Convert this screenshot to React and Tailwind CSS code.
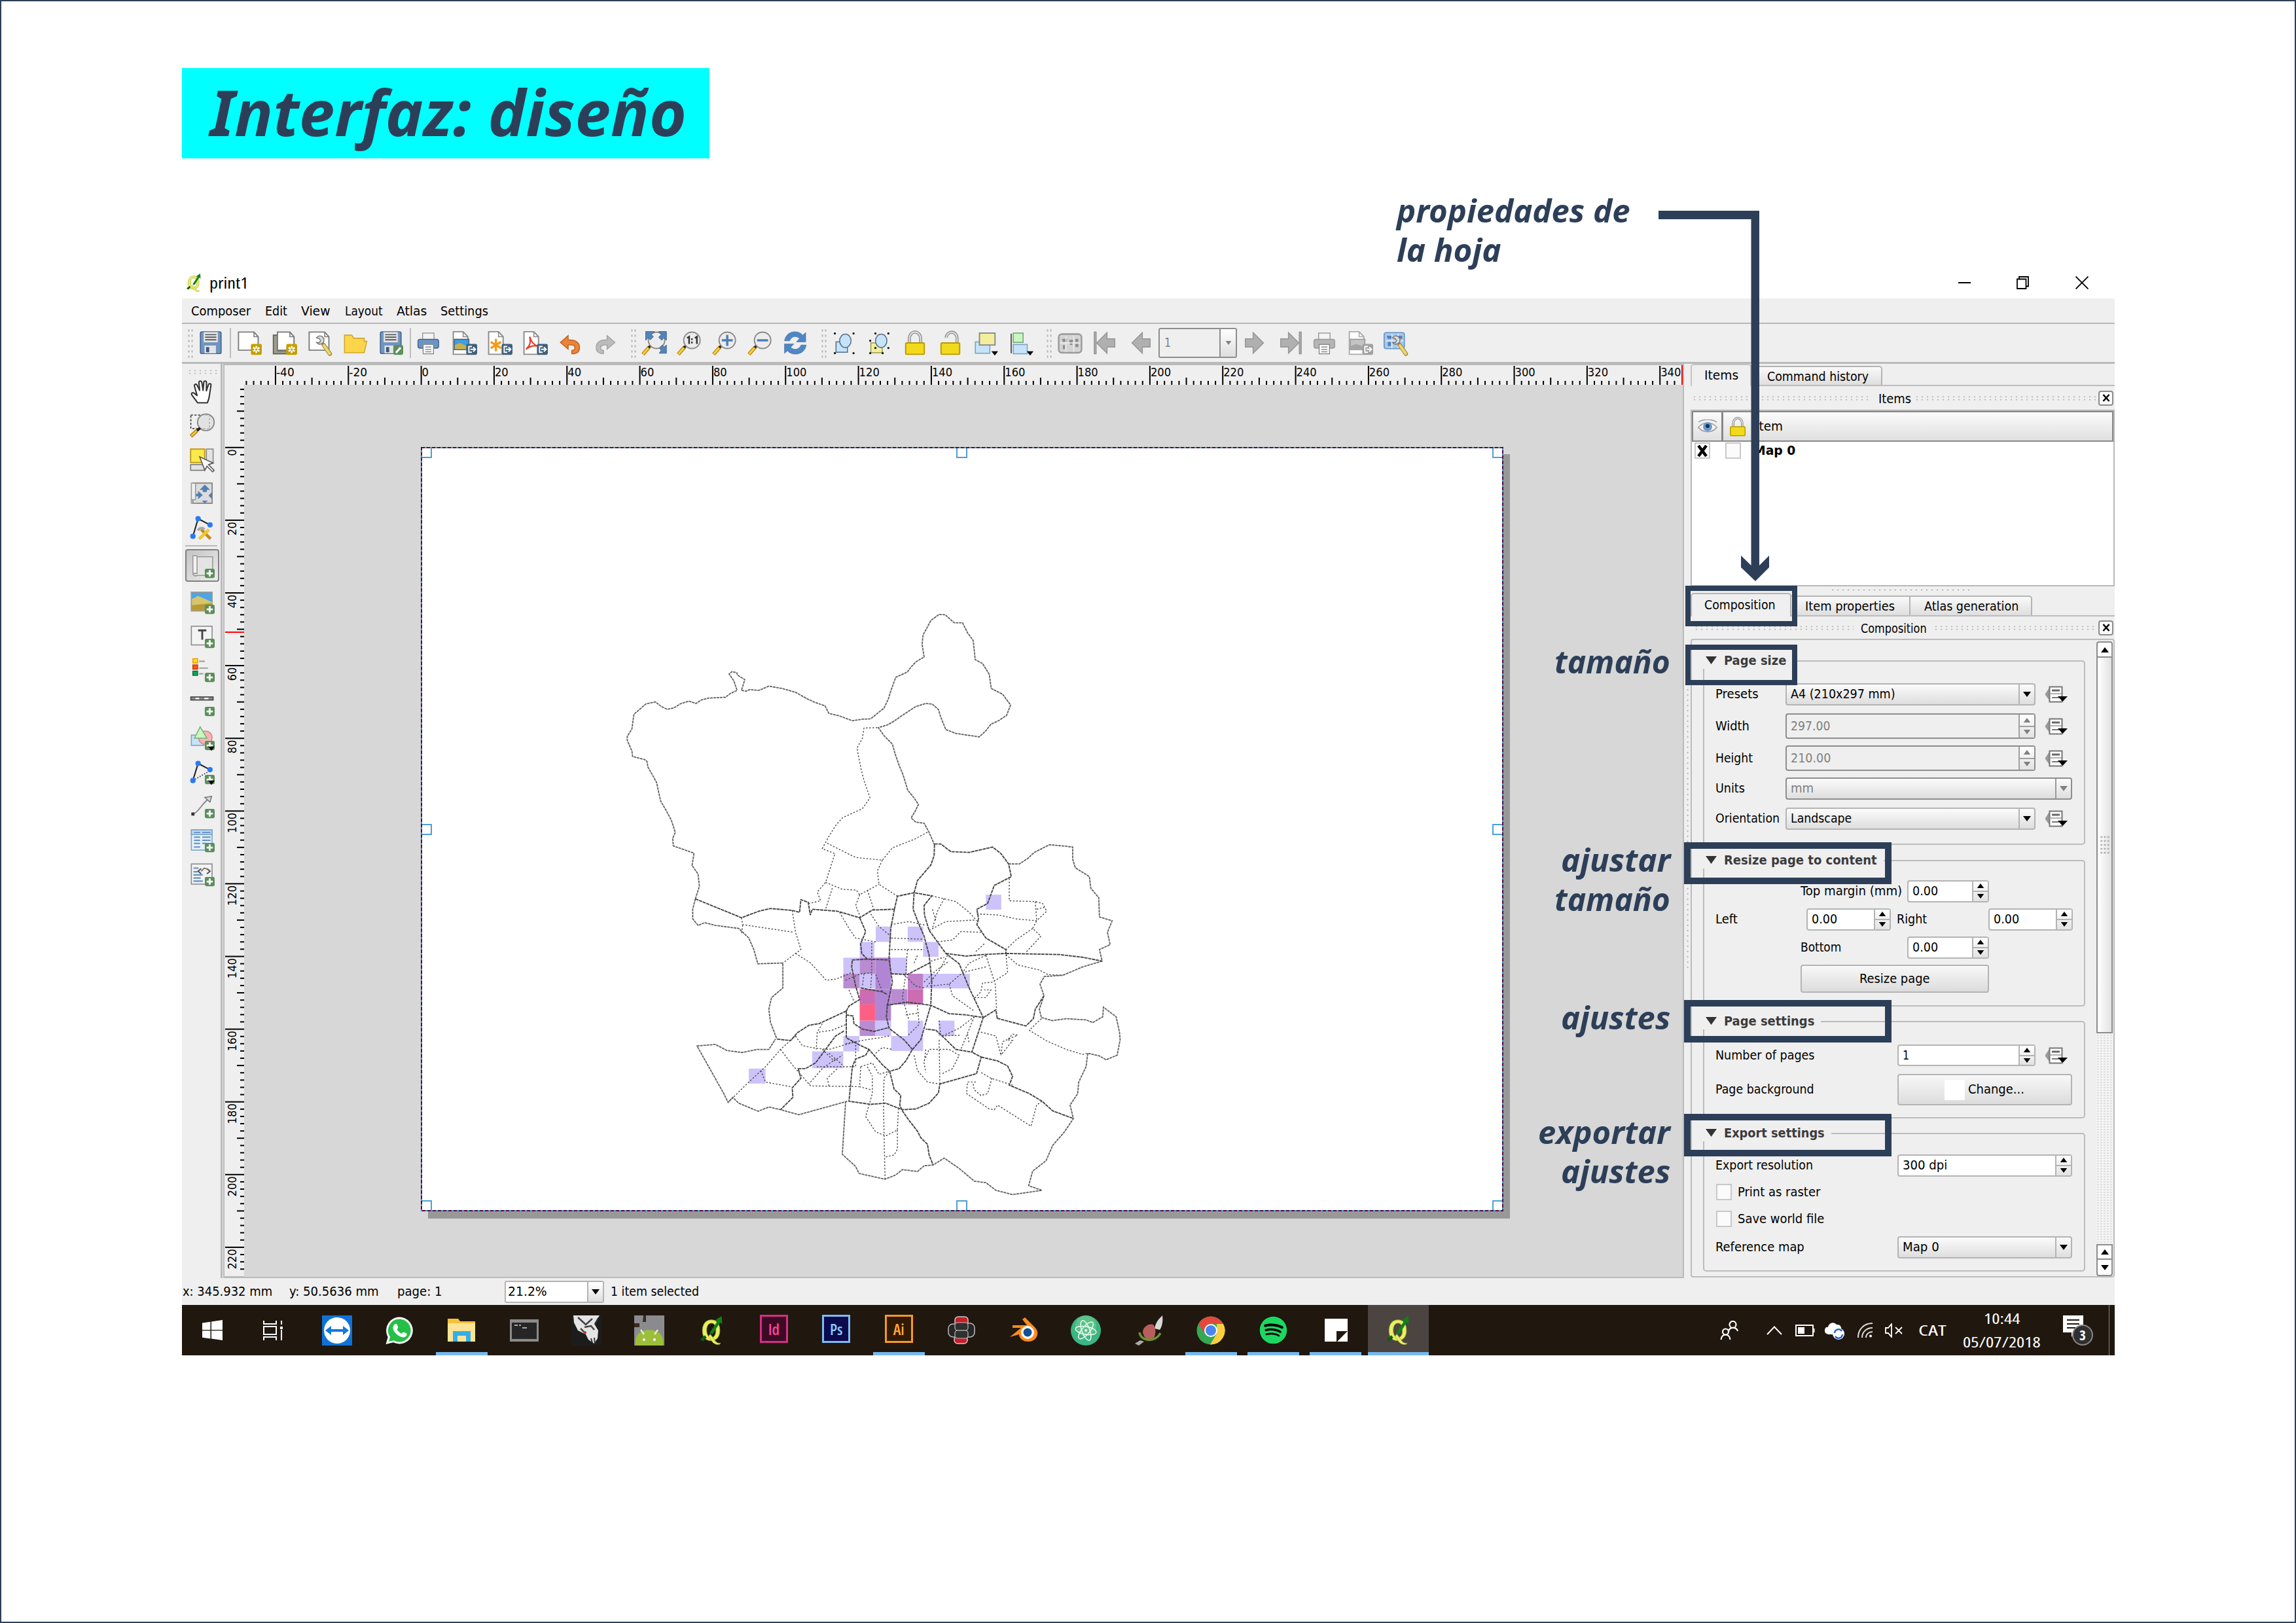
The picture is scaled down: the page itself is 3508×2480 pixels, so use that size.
import React, { useLayoutEffect, useRef, useState } from "react";
import { FaSpotify } from "react-icons/fa";

/* Single line of text stretched horizontally so that it is exactly w pixels wide. */
function T({ w, className = "", children }) {
  const ref = useRef(null);
  const [s, setS] = useState(1);
  useLayoutEffect(() => {
    const n = ref.current.offsetWidth;
    if (n) setS((w + 2) / n);
  }, [w]);
  return (
    <span className={"inline-flex shrink-0 whitespace-nowrap " + className} style={{ width: w }}>
      <span ref={ref} className="-ml-[1px] inline-block origin-left" style={{ transform: `scaleX(${s})` }}>
        {children}
      </span>
    </span>
  );
}

/* ---------- icon primitives (24 x 24 grid) ---------- */
function Ic({ children, className = "w-[38px] h-[38px]" }) {
  return (
    <svg viewBox="0 0 24 24" className={"shrink-0 overflow-visible " + className} fill="none">
      {children}
    </svg>
  );
}
const Plus = () => (
  <g>
    <rect x="14.5" y="14.5" width="9.5" height="9" rx="1.5" fill="#5b8f5b" />
    <path d="M19.2 16v6M16.2 19h6" stroke="#fff" strokeWidth="1.8" />
  </g>
);
const Star = () => (
  <g>
    <rect x="13.5" y="13" width="10.5" height="10.5" rx="1.5" fill="#c4a000" />
    <path d="M18.7 14.8v7M15.7 16.5l6 3.5M21.7 16.5l-6 3.5" stroke="#fff" strokeWidth="1.5" />
    <circle cx="18.7" cy="18.3" r="1.1" fill="#c4a000" />
  </g>
);
const Out = ({ c = "#3f607c" }) => (
  <g>
    <rect x="13.5" y="13" width="10.5" height="10.5" rx="1.5" fill={c} />
    <path d="M19 15.5h-3v5.500h3M17.500 18.200h4.500M20.200 16l2.200 2.200-2.200 2.200" stroke="#fff" strokeWidth="1.2" />
  </g>
);
const Sheet = ({ c = "#7d7d7d" }) => (
  <g>
    <path d="M1.500 1.500h15l4 4.500v13h-19z" fill="#fff" stroke={c} strokeWidth="1.200" />
    <path d="M16.500 1.500v4.500h4" stroke={c} strokeWidth="1" />
  </g>
);
const Portrait = ({ c = "#8a8a8a" }) => (
  <g>
    <path d="M1 1.200h9.500l4.500 4.800v17h-14z" fill="#fff" stroke={c} strokeWidth="1.200" />
    <path d="M10.500 1.200v4.800h4.500" stroke={c} strokeWidth="1" />
  </g>
);
const Disk = () => (
  <g>
    <rect x="2" y="1.300" width="20" height="21" rx="1.500" fill="#6d94c4" stroke="#45658f" strokeWidth="1" />
    <rect x="5" y="1.500" width="14" height="10" fill="#eee" stroke="#8a9bb0" strokeWidth=".6" />
    <path d="M6.500 4h11M6.500 6.500h11M6.500 9h11" stroke="#555" strokeWidth="1.200" />
    <rect x="6" y="14.500" width="11" height="7.500" fill="#e4e4e4" />
    <rect x="7.500" y="16" width="3" height="5" fill="#3b587f" />
  </g>
);
const Printer = ({ c = "#6d94c4", d = "#45658f" }) => (
  <g transform="translate(-1 0)">
    <rect x="6.500" y="2.500" width="11" height="8" fill="#f4f4f4" stroke="#999" strokeWidth=".9" />
    <rect x="2" y="8.500" width="20" height="8.500" rx="2" fill={c} stroke={d} strokeWidth=".9" />
    <rect x="7" y="13.500" width="10" height="9" fill="#fff" stroke="#888" strokeWidth=".9" />
    <path d="M9 16h6M9 18.300h6M9 20.500h6" stroke="#888" strokeWidth=".9" />
  </g>
);
const Lens = ({ children }) => (
  <g>
    <path d="M.800 23l6.500-7.500" stroke="#c08a10" strokeWidth="3.600" />
    <path d="M1.100 22.600l5-5.700" stroke="#f7d040" strokeWidth="1.800" />
    <path d="M6.500 16.500l2.300-2.700" stroke="#222" strokeWidth="2.200" />
    <circle cx="14" cy="9.500" r="7.900" fill="#ececec" stroke="#8a8a8a" strokeWidth="1.200" />
    {children}
  </g>
);
const Wrench = () => (
  <g>
    <path d="M15.500 14l6 8.500" stroke="#a08a3c" strokeWidth="4" strokeLinecap="round" />
    <path d="M15.800 14.500l5.500 7.800" stroke="#ecd672" strokeWidth="2.600" strokeLinecap="round" />
    <path d="M8.500 7a4 4 0 1 1 0 4.500l3 .2 1-2-1.500-2z" fill="#dcdcdc" stroke="#777" strokeWidth=".9" />
  </g>
);
const Drop = () => <path d="M17.500 20h6.500l-3.200 4.200z" fill="#000" />;
const Arrow = ({ flip, bar }) => (
  <g transform={flip ? "matrix(-1 0 0 1 24 0)" : undefined} fill="#b0b0b0" stroke="#949494" strokeWidth=".9">
    <path d="M3.500 12L13.500 2v6H21v8h-7.500v6z" />
    {bar && <rect x="1.200" y="1.500" width="1.800" height="21" />}
  </g>
);
const Qgis = () => (
  <g>
    <path
      d="M12 3.200c-5.500 0-7.500 4.500-7.500 9s2 8.300 7 8.300c5.500 0 7.500-4 7.500-8.600s-2-8.700-7-8.700zm0 2.700c2.800 0 3.700 2.800 3.700 6s-1 5.900-3.700 5.900-4-2.700-4-5.900 1.200-6 4-6z"
      fill="#e6f063" stroke="#a3a72e" strokeWidth=".5" fillRule="evenodd"
    />
    <path d="M11 15l4 5.500c1 1.500 2.500 2.500 4.500 2l-.5 1c-3 .8-5.500-.5-7-3l-2.500-3.500z" fill="#e6f063" stroke="#a3a72e" strokeWidth=".4" />
    <path d="M10.500 14L17 4.200l-2-.6L20.500 0l.5 6.700-1.800-1.300-6.200 9.600z" fill="#12801a" />
    <path d="M2.500 19.500l4-3.500 1.500 2-3 3z" fill="#0e5c1a" />
  </g>
);
const LockBody = () => <rect x="3" y="12" width="18" height="11" rx="1" fill="#f2d91c" stroke="#b89a00" strokeWidth="1.200" />;
const Corners = ({ p }) => p.map(([x, y]) => <rect key={x + "-" + y} x={x} y={y} width="1.800" height="1.800" fill="#111" />);

const I = {
  save: <Disk />,
  page: <g><Sheet /><Star /></g>,
  dup: (
    <g>
      <path d="M1 4.500h4v15h14v3H1z" fill="#9b9d8c" stroke="#5e5e55" />
      <path d="M5 1.500h12l4 4.500v13H5z" fill="#fff" stroke="#777" strokeWidth="1.200" />
      <path d="M17 1.500v4.500h4" stroke="#777" />
      <Star />
    </g>
  ),
  manage: <g><Sheet /><Wrench /></g>,
  folder: <path d="M1.500 21.500V4.500h7l2 3h10v3h2.500l-2.500 11z" fill="#fbd64b" stroke="#d2a82a" />,
  saveAs: (
    <g>
      <Disk />
      <rect x="14.500" y="14" width="9.500" height="9.500" rx="1.500" fill="#5b8f5b" />
      <path d="M17 21.500l4.500-5" stroke="#fff" strokeWidth="2" />
    </g>
  ),
  print: <Printer />,
  img: (
    <g>
      <Portrait />
      <rect x="2" y="8.500" width="14" height="10" fill="#3f9fe0" stroke="#47627f" />
      <path d="M2.500 18v-4l5-2 8 4v2z" fill="#c9b04c" />
      <Out />
    </g>
  ),
  svg: (
    <g>
      <Portrait />
      <path d="M8 8v12M3 11l10 6M13 11L3 17" stroke="#f49b1c" strokeWidth="2.200" />
      <Out />
    </g>
  ),
  pdf: (
    <g>
      <Portrait />
      <path d="M6.500 6c1 5 1 8-3.500 12 4-3 7-4 11-3-3-1-6-4-7.500-9z" stroke="#ee3a2c" strokeWidth="1.400" />
      <Out />
    </g>
  ),
  undo: <path d="M2 11.500L9.500 5v4c7.500 0 11 2.700 11 7.500 0 4-3 6-7.500 6v-3.300c2 0 3-1 3-2.700 0-2.200-2-2.700-6.500-2.700v4.200z" fill="#e9843a" stroke="#c2601c" strokeWidth=".9" />,
  redo: <path d="M20.500 11.500L13 5v4c-7.500 0-10.500 2.700-10.500 7.500 0 4 3 6 7 6v-3.300c-2 0-2.800-1-2.800-2.700 0-2.200 2-2.700 6.300-2.700v4.200z" fill="#bcbcbc" stroke="#a2a2a2" strokeWidth=".9" />,
  zfull: (
    <g>
      <Lens />
      <path d="M3.500 1h8.500l-3 3 2 2-3 3-2-2-2.500 2.500zM23.500 1H16l2.500 3-2.500 2.500 3 3 2-2.500 2.500 2.500zM23.500 22h-7l2-3-2-2 3-3 1.500 2 2.500-2z" fill="#5384ba" stroke="#33567d" strokeWidth=".5" />
    </g>
  ),
  z11: (
    <Lens>
      <path d="M9.300 7.300l2-1.300v7M16.800 7.300l2-1.300v7" stroke="#333" strokeWidth="1.600" />
      <path d="M14 7.500v1.700M14 10.800v1.700" stroke="#333" strokeWidth="1.500" />
    </Lens>
  ),
  zin: <Lens><path d="M14 4.200v10.600M8.700 9.500h10.600" stroke="#4d7fb8" strokeWidth="2.200" /></Lens>,
  zout: <Lens><path d="M8.700 9.500h10.600" stroke="#4d7fb8" strokeWidth="2.200" /></Lens>,
  refresh: (
    <g fill="#4f86c6" stroke="#3d6ea8" strokeWidth=".4">
      <path d="M1 10C2 4 6.500 1.200 11 1.200c3.500 0 6 1.500 7.500 3.300L21.500 2v9h-9l3-3.200C13 5 8 5 6 10z" />
      <path d="M22 14c-1 6-5.500 8.800-10.500 8.800-3.500 0-6-1.500-7.500-3.300L1 22v-9h9l-3 3.200c2.500 2.800 8 2.800 10-2.200z" />
    </g>
  ),
  sel: (
    <g>
      <rect x="4" y="11" width="11" height="10" fill="#c6e3fa" stroke="#56748c" />
      <ellipse cx="13" cy="10" rx="5.500" ry="6.500" fill="#c6e3fa" stroke="#56748c" />
      <Corners p={[[2, 2], [20, 2], [2, 21], [20, 21]]} />
    </g>
  ),
  desel: (
    <g>
      <rect x="3.500" y="12" width="11" height="9.500" fill="#f3ee9c" stroke="#a09a50" />
      <ellipse cx="13.500" cy="10" rx="5.500" ry="6.500" fill="#c6e3fa" stroke="#56748c" />
      <Corners p={[[7, 2], [19.500, 2], [2, 9], [2, 21], [14, 21], [7, 16], [19.500, 16]]} />
    </g>
  ),
  lock: (
    <g>
      <path d="M6.500 12V8a5.500 6.500 0 0 1 11 0v4" stroke="#999" strokeWidth="3" />
      <path d="M6.500 12V8a5.500 6.500 0 0 1 11 0v4" stroke="#e8e8e8" strokeWidth="1" />
      <LockBody />
    </g>
  ),
  unlock: (
    <g>
      <path d="M8 7a5 5.500 0 0 1 10.500 1v4" stroke="#999" strokeWidth="3" />
      <path d="M8 7a5 5.500 0 0 1 10.500 1v4" stroke="#e8e8e8" strokeWidth="1" />
      <LockBody />
    </g>
  ),
  raise: (
    <g>
      <rect x="2" y="11" width="14" height="11" fill="#c6e3fa" stroke="#7da3c0" />
      <rect x="6" y="2.500" width="15" height="11.500" fill="#f3ee9c" stroke="#8a8a8a" strokeWidth="1.200" />
      <Drop />
    </g>
  ),
  align: (
    <g>
      <path d="M2.500 3v19" stroke="#333" strokeWidth="1" />
      <rect x="4.500" y="2.500" width="9.500" height="9" fill="#c8f7c0" stroke="#7da37d" />
      <rect x="4.500" y="13.500" width="13.500" height="9" fill="#c6e3fa" stroke="#7da3c0" />
      <Drop />
    </g>
  ),
  atlas: (
    <g>
      <rect x="1" y="3.500" width="22" height="18" rx="3" fill="#d4d4d4" stroke="#999" strokeWidth="1.500" />
      <path d="M4 8h5v3H5zM11 9h4l-1 5h-2zM17 8h3v3h-3zM5 14h2v4H5zM17 13h3v3h-3z" fill="#8e8e8e" />
      <path d="M8 5v16M15.500 5v16M2 12h20" stroke="#eee" strokeWidth=".8" />
    </g>
  ),
  first: <Arrow bar />,
  prev: <Arrow />,
  next: <Arrow flip />,
  last: <Arrow flip bar />,
  printOff: <Printer c="#b5b5b5" d="#999" />,
  imgOff: (
    <g>
      <Portrait c="#aaa" />
      <rect x="2" y="8.500" width="14" height="10" fill="#c4c4c4" stroke="#999" />
      <path d="M2.500 18v-3l5-2 8 3v2z" fill="#a5a5a5" />
      <Out c="#a0a0a0" />
    </g>
  ),
  atlasSet: (
    <g>
      <rect x=".5" y="2" width="19.500" height="15.500" rx="2" fill="#a9c9ec" stroke="#5d93cc" strokeWidth="1" />
      <path d="M3 5h5v3H4zM13 5h5v3h-5zM4 11h3v4H4z" fill="#5682b5" />
      <path d="M8 3v14M14 3v14M2 10h17" stroke="#e8f2fb" strokeWidth=".8" />
      <Wrench />
    </g>
  ),
  hand: (
    <path
      d="M7.500 23L2 15.500c-1-2 1-3 2.500-1.500L7 16 4.500 7c-.5-2 2-2.500 2.600-.8L9.500 11 8.800 3.500c0-2 2.500-2 2.800 0L12.800 11 13.500 3.500c.2-2 2.600-1.800 2.600.2L16 11.500l2-6c.7-1.600 2.700-1 2.400.7l-1.400 9.300c-.3 3-1 5-2 7.500z"
      fill="#fff" stroke="#333" strokeWidth="1.300" strokeLinejoin="round"
    />
  ),
  zoomArea: (
    <g>
      <rect x="1" y="2" width="18" height="13" stroke="#333" strokeWidth="1" strokeDasharray="2 1.500" />
      <ellipse cx="15.500" cy="9" rx="8" ry="8" fill="#ddd" fillOpacity=".75" stroke="#888" strokeWidth="1.200" />
      <path d="M1 22.500l6-5.500" stroke="#b98510" strokeWidth="3.500" />
      <path d="M1.500 22l5-4.600" stroke="#f7d040" strokeWidth="1.500" />
      <path d="M7 17l3-2.500" stroke="#222" strokeWidth="2.500" />
    </g>
  ),
  select: (
    <g>
      <rect x=".8" y="2" width="13.500" height="13" fill="#fbe84b" stroke="#c09a10" strokeWidth="1.200" />
      <rect x="16" y="2" width="6.500" height="13" fill="#e2e2e2" stroke="#888" />
      <rect x=".8" y="17" width="13.500" height="5.500" fill="#e2e2e2" stroke="#777" />
      <path d="M9.500 9.500l5 13 2-4 5.500 5.500 1.500-1.500-5.500-5.500 4.500-1.500z" fill="#fff" stroke="#555" />
    </g>
  ),
  move: (
    <g>
      <rect x="3" y="2" width="18.500" height="19.500" fill="#dcdcdc" stroke="#888" strokeWidth="1.200" />
      <path d="M1.500 2h4v16h-4z" fill="#f0f0f0" stroke="#999" />
      <path d="M1.500 18v3.500h5" stroke="#999" />
      <path d="M14.500 3.500l5 5h-3v2h-4v-2h-3zM8 9.500l4.500 4-4.500 4zM21.500 10.500v7l-3.500-3.500zM11.500 19h6l-3 2.500z" fill="#4f80b5" />
      <path d="M6 13.500h4" stroke="#4f80b5" strokeWidth="2.400" />
    </g>
  ),
  nodes: (
    <g>
      <path d="M3 20.500L8 3.500l11.500 6" stroke="#222" strokeWidth="1.300" />
      <circle cx="3" cy="20.500" r="2.600" fill="#2b7bef" />
      <circle cx="8" cy="3.500" r="2.600" fill="#2b7bef" />
      <circle cx="19.500" cy="9.500" r="2.600" fill="#2b7bef" />
      <path d="M20 23l-9-9" stroke="#c8851a" strokeWidth="2.800" />
      <path d="M9 23l9.500-9" stroke="#eec82e" strokeWidth="3" />
      <path d="M8 15c1-3 5-3 6-1" stroke="#aaa" strokeWidth="2.500" />
    </g>
  ),
  map: (
    <g>
      <path d="M4 3h18v18H6" fill="#e4e4e4" stroke="#999" />
      <path d="M3 2h4v17H3z" fill="#f2f2f2" stroke="#999" />
      <path d="M3 19c0 2 1 2.500 4 2.500" stroke="#999" />
      <Plus />
    </g>
  ),
  image: (
    <g>
      <rect x="1.500" y="2.500" width="20" height="18" fill="#4aa6e8" stroke="#999" strokeWidth="1.200" />
      <path d="M2 20V9l6-3 13.500 6v8z" fill="#d8c46a" />
      <path d="M2 20v-5l19.500-2v7z" fill="#b89a35" />
      <Plus />
    </g>
  ),
  label: (
    <g>
      <rect x="1.500" y="2.500" width="20" height="18" fill="#f4f4f4" stroke="#8a8a8a" />
      <path d="M8 6.500h8M12 6.500v9" stroke="#444" strokeWidth="1.800" />
      <Plus />
    </g>
  ),
  legend: (
    <g>
      <rect x="3" y="1" width="4.500" height="4" fill="#fce21c" stroke="#f29c00" />
      <rect x="3" y="7" width="4.500" height="4" fill="#ff5a10" stroke="#c83c00" />
      <rect x="3" y="13" width="4.500" height="4" fill="#12a858" stroke="#07703a" />
      <path d="M9 3.500h5.500M9 10h8.500M9 15.500h4" stroke="#999" strokeWidth="1.200" />
      <Plus />
    </g>
  ),
  scale: (
    <g>
      <rect x="1" y="5" width="21.500" height="3" fill="#8a8a8a" stroke="#444" />
      <path d="M5.500 6.500H9M14 6.500h4" stroke="#fff" strokeWidth="1.500" />
      <Plus />
    </g>
  ),
  shape: (
    <g>
      <rect x="1.500" y="9" width="12" height="10" fill="#c6e3fa" stroke="#7da3c0" />
      <ellipse cx="15" cy="11.500" rx="6.500" ry="6.500" fill="#f7b4b4" stroke="#d88" />
      <path d="M10 1l6.500 11h-12z" fill="#c8f7c0" stroke="#7bb07b" />
      <Plus /><Drop />
    </g>
  ),
  addNodes: (
    <g>
      <path d="M3 20L8 3.500l11.500 6" stroke="#222" strokeWidth="1.300" />
      <path d="M3 20l14-8" stroke="#222" strokeDasharray="1 1.500" />
      <circle cx="3" cy="20" r="2.600" fill="#2b7bef" />
      <circle cx="8" cy="3.500" r="2.600" fill="#2b7bef" />
      <circle cx="19.500" cy="9.500" r="2.600" fill="#2b7bef" />
      <Plus /><Drop />
    </g>
  ),
  arrow: (
    <g>
      <path d="M3 19.500C9 18 12 8 19 4.500" stroke="#888" strokeWidth="1.200" />
      <rect x="1.500" y="18" width="3" height="3" fill="#333" />
      <path d="M14.500 3.500l6.500-1-1.500 5.500z" fill="#ddd" stroke="#777" />
      <Plus />
    </g>
  ),
  table: (
    <g>
      <rect x="1.500" y="2" width="20" height="19.500" fill="#e4f0fb" stroke="#7da3c0" />
      <rect x="1.500" y="2" width="20" height="4.500" fill="#b9d8f2" stroke="#7da3c0" />
      <path d="M4 4.500h6M12 4.500h8M4 9h6M12 9h8M4 12h6M12 12h8M4 15h6M12 15h4M4 18.500h6" stroke="#5f8fc4" strokeWidth="1.200" />
      <Plus />
    </g>
  ),
  html: (
    <g>
      <rect x="1.500" y="2" width="20" height="19.500" fill="#f2f2f2" stroke="#8a8a8a" />
      <path d="M3.500 6h5M3.500 9.500h4M3.500 12.500h9M3.500 15.500h7M3.500 18.500h9" stroke="#5f8fc4" strokeWidth="1.400" />
      <path d="M11 6.500L8 9l3 2.500M16.500 6.500l3 2.500-3 2.500" stroke="#555" strokeWidth="1.300" />
      <path d="M11 9l3-3 3 1" stroke="#777" strokeWidth="1.200" />
      <Plus />
    </g>
  ),
};

/* ---------- small pieces ---------- */
const VDots = () => (
  <div className="h-[46px] w-[10px] shrink-0 bg-[radial-gradient(circle,#c2c2c2_1.500px,#fafafa_2px,transparent_2.500px)] bg-[length:5px_8px]" />
);
const HDots = ({ className }) => (
  <div className={"h-[9px] bg-[radial-gradient(circle,#c6c6c6_1.300px,#fafafa_1.800px,transparent_2.300px)] bg-[length:8px_4.500px] " + className} />
);
const VSep = () => <div className="h-[46px] w-[2px] shrink-0 bg-[#bdbdbd]" />;
const Group = ({ names, className = "" }) => (
  <div className={"flex items-center gap-4 " + className}>
    {names.map((n) => <Ic key={n}>{I[n]}</Ic>)}
  </div>
);
const Tri = ({ up, className = "" }) => (
  <svg viewBox="0 0 12 8" className={"h-[8px] w-[12px] shrink-0 " + className}>
    <path d={up ? "M6 0L12 8H0z" : "M0 0h12L6 8z"} fill="currentColor" />
  </svg>
);
const Close = () => (
  <div className="flex h-[23px] w-[23px] items-center justify-center rounded-[4px] border-2 border-[#8c8c8c] bg-[#fafafa]">
    <svg viewBox="0 0 12 12" className="h-[12px] w-[12px]"><path d="M1.500 1l9 10M10.500 1l-9 10" stroke="#000" strokeWidth="2.600" /></svg>
  </div>
);
const box = "flex shrink-0 rounded-[4px] border-2 ";
function Spin({ className, text, w, off }) {
  return (
    <div className={box + (off ? "border-[#8e8e8e] bg-[#efefef] text-[#808080] " : "border-[#b4b4b4] bg-white text-black ") + className}>
      <div className="flex flex-1 items-center pl-[7px]"><T w={w}>{text}</T></div>
      <div className={"flex w-[24px] flex-col border-l-2 bg-gradient-to-b from-white to-[#e2e2e2] " + (off ? "border-[#a0a0a0]" : "border-[#b4b4b4] text-black")}>
        <div className={"flex flex-1 items-center justify-center border-b-2 " + (off ? "border-[#a0a0a0]" : "border-[#b4b4b4]")}><Tri up className="!h-[7px]" /></div>
        <div className="flex flex-1 items-center justify-center"><Tri className="!h-[7px]" /></div>
      </div>
    </div>
  );
}
function Combo({ className, text, w, off }) {
  return (
    <div className={box + "bg-gradient-to-b from-[#fbfbfb] to-[#dedede] " + (off ? "border-[#8e8e8e] text-[#808080] " : "border-[#b4b4b4] text-black ") + className}>
      <div className="flex flex-1 items-center pl-[7px]"><T w={w}>{text}</T></div>
      <div className={"flex w-[24px] items-center justify-center border-l-2 " + (off ? "border-[#9a9a9a]" : "border-[#b4b4b4]")}><Tri /></div>
    </div>
  );
}
const Defined = () => (
  <svg viewBox="0 0 36 26" className="ml-[14px] h-[26px] w-[36px] shrink-0">
    <path d="M7 3L1 12v2l6 8z" fill="#9a9a9a" />
    <rect x="7.500" y="1.500" width="19" height="23" fill="#fff" stroke="#777" strokeWidth="2" />
    <path d="M11 7h12" stroke="#666" strokeWidth="3" />
    <path d="M7 12h19" stroke="#999" strokeWidth="1.500" />
    <path d="M11 18h11" stroke="#777" strokeWidth="2" />
    <path d="M20 16h15l-7.500 8z" fill="#000" />
  </svg>
);
function Section({ title, w, className = "", children }) {
  return (
    <div className="flex w-[584px] flex-col">
      <div className="flex h-[26px] items-center">
        <svg viewBox="0 0 17 12" className="ml-[4px] h-[12px] w-[17px] shrink-0"><path d="M0 0h17L8.500 12z" fill="#333" /></svg>
        <T w={w} className="ml-[12px] mr-[11px] mt-[1px] font-bold text-[#3c3c3c]">{title}</T>
        <div className="h-[13px] flex-1 self-end rounded-tr-[5px] border-r-2 border-t-2 border-[#bcbcbc]" />
      </div>
      <div className={"flex flex-col rounded-b-[5px] border-x-2 border-b-2 border-[#bcbcbc] pl-[18px] " + className}>{children}</div>
    </div>
  );
}
const Row = ({ label, w, lw = "w-[106px]", className = "h-[33px]", children }) => (
  <div className={"flex items-center " + className}>
    <div className={"flex shrink-0 " + lw}><T w={w}>{label}</T></div>
    {children}
  </div>
);
const Check = ({ className = "", children }) => (
  <div className={"flex h-[25px] w-[24px] shrink-0 items-center justify-center border-2 border-[#c8c8c8] bg-[#fbfbfb] " + className}>{children}</div>
);

/* ---------- rulers ---------- */
const STEP = 11.133;
function TopRuler() {
  const t = [];
  for (let i = -24; i <= 172; i++) {
    const x = 642.6 - 342 + i * STEP;
    const h = i % 10 === 0 ? 29 : i % 5 === 0 ? 11 : 6;
    t.push(<rect key={i} x={x - 1} y={30 - h} width="2" height={h} fill="#000" />);
    if (i % 10 === 0) {
      const s = String(i * 2);
      t.push(<text key={"t" + i} x={x + 1} y="16.500" fontSize="17.500" textLength={s.replace("-", "").length * 10.4 + (i < 0 ? 7 : 0)} lengthAdjust="spacingAndGlyphs">{s}</text>);
    }
  }
  return (
    <svg width="2228" height="30" className="shrink-0 overflow-visible">
      {t}
      <rect x="2226" y="0" width="2" height="30" fill="#f00" />
    </svg>
  );
}
function SideRuler() {
  const t = [];
  for (let i = -8; i <= 113; i++) {
    const y = 682.8 - 587 + i * 11.11;
    const h = i % 10 === 0 ? 29 : i % 5 === 0 ? 11 : 6;
    t.push(<rect key={i} x={30 - h} y={y - 1} width={h} height="2" fill="#000" />);
    if (i % 10 === 0) {
      const s = String(i * 2);
      const l = s.length * 10.4;
      t.push(<text key={"t" + i} transform={`translate(18 ${y + 2.5 + l}) rotate(-90)`} fontSize="18" textLength={l} lengthAdjust="spacingAndGlyphs">{s}</text>);
    }
  }
  return (
    <svg width="30" height="1363" className="shrink-0 overflow-visible">
      {t}
      <rect x="1" y="377" width="29" height="2" fill="#f00" />
    </svg>
  );
}

/* ---------- map drawing ---------- */
const HEAVY = [
  "M956,632L955,660 945,685 905,725 895,757 892,800 910,840 925,870 940,920 948,985 945,1050",
  "M836,800L825,850 820,930 830,990 815,1050 812,1080 820,1110 865,1140 890,1165 870,1195 850,1215 822,1222",
  "M240,773L378,822 430,805 465,798 530,803 552,808 556,775 578,782 584,815 590,800 665,805 732,822 770,802 836,800",
  "M836,800L845,766 895,757 948,765 925,790 926,815 940,855 965,885 990,915 1030,942 1060,1005 1102,1082",
  "M732,822L750,858 735,890 738,915 755,930 818,932M755,930L710,932 708,950 720,1000 732,1035 700,1052 692,1065",
  "M825,968L875,970 945,938M735,1005L800,1015 815,1022M812,1050L875,1042 945,1050 1000,1072 1050,1075 1102,1082 1068,1172 1020,1165 985,1135 960,1115 930,1112",
  "M990,915L1050,922 1100,918 1170,915 1170,905 1110,875 1083,840 1088,825M1170,915L1330,918 1400,925 1458,935",
  "M692,1065L692,1135 735,1155 760,1165 800,1205 822,1222 835,1268 855,1285 852,1310 860,1325 880,1350 905,1378 915,1395 935,1412 940,1440 952,1466",
  "M760,1165L750,1180 720,1190 710,1210 700,1300 765,1308 810,1305 860,1322 900,1320 940,1305 968,1278 972,1255 1082,1228 1096,1185 1068,1172M1096,1185L1145,1195 1175,1208 1190,1235 1180,1258 1240,1280 1278,1300 1310,1325 1372,1345",
  "M685,1117L660,1130 630,1165 600,1200 570,1215 548,1215 556,1240 530,1265 532,1290 495,1322",
  "M692,1075L712,1078 715,1098 740,1112 775,1118 820,1108M890,1165L915,1140 945,1050",
  "M956,630L975,630 1005,650 1060,652 1130,638 1155,655 1178,682 1186,715 1135,738 1115,785 1083,800 1088,825",
  "M1144,1084L1230,1104 1252,1085 1258,1060 1284,1025M1144,1084L1140,1062 1102,1082M692,1065L610,1098 580,1102 545,1122 525,1142 484,1138",
];
const OUTER = [
  "M240,773L252,740 248,708 230,686 236,654 174,635 172,615 180,600 168,568 152,542 136,518 130,495 124,470 108,445 98,430 95,415 88,410 52,402 50,388 36,360 36,350 50,330 56,292 75,278 92,265 120,260 138,272 155,279 175,276 195,265 220,258 242,264 258,255 280,250 330,248 345,238 365,230 355,205 341,187 350,181 364,184 366,190 388,202 378,230 392,232 402,228 430,230 460,219 500,225 540,235 575,252 600,262 628,270 640,290 670,296 710,309 740,305 765,304 785,290 805,276 818,252 825,232 840,196 875,182 885,170 900,156 925,143 919,110 922,85 935,65 945,48 970,32 988,33 1015,54 1040,54 1055,80 1072,100 1078,150 1100,160 1120,188 1126,225 1160,240 1184,268 1172,295 1150,308 1125,318 1110,335 1090,351 1050,346 1020,342 990,332 975,300 968,280 950,266 930,264 900,272 860,295 835,310 815,320 788,327 805,348 830,370 838,395 850,425 862,450 876,490 895,510 908,527 898,545 886,562 900,573 925,576 940,600 956,632",
  "M1178,682L1210,682 1235,668 1255,652 1300,632 1340,635 1370,638 1370,670 1378,692 1420,715 1424,745 1448,770 1450,820 1488,830 1474,860 1482,892 1450,905 1458,935 1400,950 1340,972 1285,975 1272,995 1284,1025 1270,1060 1276,1082 1310,1090 1350,1085 1410,1088 1430,1095 1460,1080 1462,1055 1500,1080 1510,1120 1512,1140 1503,1180 1470,1192 1450,1182 1415,1175 1410,1210 1388,1250 1385,1280 1362,1310 1372,1345 1345,1380 1310,1415 1290,1455 1250,1482 1238,1520 1278,1532 1190,1543 1140,1532 1110,1512 1075,1508 1030,1475 985,1448 952,1466 925,1468 905,1483 860,1478 840,1492 808,1503 730,1488 720,1470 680,1438 690,1300 M695,1300L550,1335 495,1322 460,1315 428,1326 370,1305 352,1290 338,1303 325,1280 245,1156 300,1152 335,1168 380,1173 425,1165 460,1165 480,1138",
  "M240,773L232,800 232,825 248,842 268,835 300,842 370,850 400,875 415,905 427,942 502,940 502,1005 468,1030 460,1060 465,1095 484,1138",
];
const INNER = [
  "M785,327L745,328 740,355 724,380 735,430 745,465 763,510 740,538 710,550 680,562 660,582 640,610 620,642 658,655 630,730 605,755 615,778 580,785",
  "M635,628L680,648 720,665 800,672 830,640 895,618 938,598M800,672L785,700 790,735 845,766M630,730L680,748 722,750 732,762 790,735",
  "M650,745L630,800M732,762L720,790 735,822M755,750L775,802M378,822L382,840 535,860M530,803L540,860 556,905 540,915 502,940",
  "M540,915L585,940 632,985 660,982 690,972 708,965M672,808L700,850 720,875 780,885M760,805L790,845 825,870M825,840L880,832 930,842M826,875L925,878M826,905L925,905",
  "M940,855L990,832 1080,828M948,765L1020,780 1060,808 1083,830M985,772L965,805 950,850M965,885L1010,880 1035,858 1095,860M950,800L960,830",
  "M1083,812L1150,815 1200,825 1262,830 1292,805 1280,785 1258,780 1180,778 1180,720M1258,780L1262,830 1250,850 1275,870 1230,912M1250,850L1200,880 1170,905M1262,800L1285,795",
  "M1105,890L1080,910M1170,918L1205,945 1270,958 1295,970 1340,972M1110,920L1138,995 1142,1060M1170,918L1175,965 1130,990 1100,992 1095,1015 1078,1030 1110,1030 1125,1010 1105,1010M378,862L382,840",
  "M995,920L970,960 930,1005M1110,950L1040,965 1000,995 940,1000M1000,995L1010,1025 1075,1065M925,990L960,960 1000,935M945,935L985,925M1110,920L1060,940 1040,965",
  "M875,905L870,970 860,1030 880,1090M905,1050L910,1100 875,1130M735,968L768,965 768,885M780,970L800,1015M865,970L900,1000 925,1005M895,940L905,920M745,968L740,1000M768,968L765,1005M870,1075L910,1070M690,985L735,968M700,1010L715,1040",
  "M620,1098L605,1120 602,1165M540,1130L560,1155 600,1162 640,1165 720,1145M610,1120L650,1115 690,1100M720,1145L720,1210 600,1210M660,1190L620,1215 580,1255M620,1165L655,1195 680,1180M640,1175L680,1205",
  "M540,1130L495,1165 450,1210 400,1250 338,1303M495,1165L530,1205 560,1235 585,1260 730,1262M436,1220L450,1250 525,1262M640,1260L635,1240 665,1215M735,1210L732,1262 765,1270M735,1210L770,1200 790,1230 820,1222M755,1210L770,1235",
  "M820,1222L805,1240 803,1300 808,1503M770,1240L770,1280 750,1340 780,1380 810,1390 845,1375 848,1320M845,1375L845,1425 835,1440 810,1445M690,1150L750,1140 790,1135 820,1130M780,1175L800,1160 830,1165",
  "M895,1180L905,1220 935,1250 972,1255M970,1140L972,1255M930,1165L925,1200 930,1225M925,1195L940,1165 1000,1165 1030,1180 1010,1215 975,1230M1075,1080L1035,1165M980,1130L1030,1110 1075,1080M970,1090L975,1130 1035,1128M1055,1125L1060,1150",
  "M1095,1120L1140,1130 1155,1180 1160,1145 1205,1128 1190,1125 1175,1140 1190,1142 1155,1180M1276,1085L1240,1115 1290,1142 1350,1165 1400,1178 1415,1175",
  "M1096,1225L1125,1240 1190,1258M1080,1250L1055,1250 1052,1280 1120,1320 1135,1322 1145,1310 1245,1365 1262,1310 1278,1300M1072,1255L1075,1270 1095,1285 1115,1280 1128,1240",
];
const HEAT = [
  ["#cdc3fa", [[1110, 762, 46, 39], [780, 845, 46, 40], [876, 845, 46, 40], [732, 885, 44, 41], [922, 885, 46, 39], [683, 926, 49, 42], [826, 926, 48, 42], [922, 968, 140, 38], [732, 968, 47, 38], [876, 1090, 46, 40], [968, 1090, 48, 40], [778, 1090, 48, 40], [683, 1130, 48, 40], [826, 1130, 96, 39], [590, 1170, 93, 44], [400, 1215, 50, 39]]],
  ["#b98cd2", [[732, 926, 47, 42], [683, 968, 49, 38], [826, 1008, 49, 40], [732, 1090, 46, 40]]],
  ["#b086d4", [[779, 926, 47, 82], [778, 1008, 48, 82]]],
  ["#be80c8", [[876, 968, 46, 40]]],
  ["#cd6cb2", [[732, 1008, 46, 40], [876, 1008, 46, 40]]],
  ["#ff5f84", [[732, 1048, 46, 42]]],
];
const MapDrawing = () => (
  <svg viewBox="0 0 1568 1568" preserveAspectRatio="none" className="absolute left-[297px] top-[237px] h-[920px] w-[800px]" fill="none">
    {HEAT.map(([c, l]) => l.map((r) => <rect key={r.join()} x={r[0]} y={r[1]} width={r[2]} height={r[3]} fill={c} />))}
    {OUTER.map((d) => <path key={d} d={d} stroke="#606060" strokeWidth="1.800" strokeDasharray="4 1" vectorEffect="non-scaling-stroke" />)}
    {HEAVY.map((d) => <path key={d} d={d} stroke="#444" strokeWidth="1.900" strokeDasharray="5 1" vectorEffect="non-scaling-stroke" />)}
    {INNER.map((d) => <path key={d} d={d} stroke="#4c4c4c" strokeWidth="1.400" strokeDasharray="2.500 2.500" vectorEffect="non-scaling-stroke" />)}
  </svg>
);
const Grip = ({ className }) => <div className={"absolute h-[17px] w-[17px] border-2 border-[#4f9fd4] bg-white " + className} />;

/* ---------- taskbar ---------- */
const Cell = ({ open, active, children }) => (
  <div className="flex w-[95.400px] shrink-0 justify-center">
    <div className={"flex h-[77px] shrink-0 flex-col items-center justify-between pt-[15px] " + (active ? "w-[93px] bg-[#4b4440]" : "w-[79px]")}>
      <div className="flex h-[47px] items-center justify-center">{children}</div>
      <div className={"h-[5px] w-full " + (open ? "bg-[#76b9ed]" : "")} />
    </div>
  </div>
);
const Adobe = ({ children, cls }) => (
  <div className={"mb-[4px] flex h-[43px] w-[43px] items-center justify-center border-[3px] font-['Open_Sans',sans-serif] text-[24px] font-semibold leading-none " + cls}>{children}</div>
);
const Big = ({ children }) => <svg viewBox="0 0 46 46" className="h-[46px] w-[46px]" fill="none">{children}</svg>;

function Taskbar() {
  return (
    <div className="flex h-[77px] bg-[#20170f] text-white">
      <div className="flex w-[92px] shrink-0 items-center justify-center">
        <svg viewBox="0 0 31 31" className="h-[31px] w-[31px]"><path d="M0 4.500L12.500 2.700V15H0zM14 2.500L31 0v15H14zM0 16.300h12.500v12.200L0 26.700zM14 16.300h17V31l-17-2.400z" fill="#fff" /></svg>
      </div>
      <div className="flex w-[97px] shrink-0 items-center justify-center pr-[2px]">
        <svg viewBox="0 0 31 30" className="h-[30px] w-[31px]" fill="none" stroke="#fff" strokeWidth="2"><path d="M1 0v5h19V0M1 30v-5h19v5M1 9h19v12H1zM28 0v6M28 14v16" /><rect x="26" y="9" width="4" height="4" fill="#fff" stroke="none" /></svg>
      </div>
      <Cell><Big><rect width="46" height="46" fill="#0e72d8" /><circle cx="23" cy="23" r="20" fill="#fff" /><path d="M5 23l9-7v5h18v-5l9 7-9 7v-5H14v5z" fill="#1379dd" /></Big></Cell>
      <Cell>
        <Big>
          <path d="M23 2.500a20.500 20.500 0 1 1-9 38.800L2.500 44l3.200-11A20.500 20.500 0 0 1 23 2.500z" fill="#fff" />
          <path d="M23 5.500a17.500 17.500 0 1 1-8.600 32.700L7 40l2-7.200A17.500 17.500 0 0 1 23 5.500z" fill="#25c046" />
          <path d="M16 13.500c1-1 3-1 3.500.3l1.800 4c.3 1-.2 1.700-1.800 3.400 1.500 3 4 5.300 7.200 6.700 1.700-2.300 2.300-2.700 3.300-2.300l4 2c1 .6.900 2.500-.3 3.900-1.700 1.900-4.400 2.500-7.200 1.500-6-2-9.800-5.700-12.200-10.500-1.700-3.500-.8-6.800 1.700-9z" fill="#fff" />
        </Big>
      </Cell>
      <Cell open><Big><path d="M2 5h16l3 4h23v30H2z" fill="#f5c13c" /><path d="M2 12h42v28H2z" fill="#fde494" /><path d="M10 24h27v16h-7V31H17v9h-7z" fill="#35aee6" /></Big></Cell>
      <Cell><Big><rect x="1" y="6" width="44" height="34" fill="#8b8b8b" /><rect x="4" y="11" width="38" height="25" fill="#262626" /><path d="M8 15h5M15 15h3M20 19h7" stroke="#aaa" strokeWidth="2" /></Big></Cell>
      <Cell><Big><rect width="46" height="46" fill="#1c1c1c" /><path d="M3 0h40l-8 13 6 10-1 12-5 8-9-6-4-8-12-6-6-12z" fill="#e4e4e4" /><path d="M10 3l12 11 10-9M20 18l10-2 5 6M14 20l8 8" stroke="#444" strokeWidth="2.500" /><path d="M36 13l5-9M30 35l2 7M35 34l1 9" stroke="#333" strokeWidth="2" /><circle cx="21" cy="26" r="2" fill="#c33" /></Big></Cell>
      <Cell><Big><rect width="46" height="46" fill="#8b8b8f" /><path d="M0 12h8v6H0zM14 0h4v10h-5z" fill="#3a2a20" /><path d="M2 46V38a20 15 0 0 1 42 0v8z" fill="#9cbf3a" /><path d="M10 22l5 7M36 22l-5 7" stroke="#e4edc8" strokeWidth="2.500" /><circle cx="15" cy="37" r="2" fill="#fff" /><circle cx="31" cy="37" r="2" fill="#fff" /></Big></Cell>
      <Cell><Ic className="h-[44px] w-[44px]"><Qgis /></Ic></Cell>
      <Cell><Adobe cls="border-[#d62f86] bg-[#3c0a24] text-[#ff42a1]">Id</Adobe></Cell>
      <Cell><Adobe cls="border-[#7cbcf4] bg-[#0b0a4c] text-[#8bc9fb]">Ps</Adobe></Cell>
      <Cell open><Adobe cls="border-[#f79a25] bg-[#311a04] text-[#fba63c]">Ai</Adobe></Cell>
      <Cell>
        <Big>
          <rect x="13" y="2" width="20" height="14" rx="5" fill="#c81e26" stroke="#ccc" strokeWidth="1.500" />
          <rect x="12" y="31" width="20" height="12" rx="5" fill="#c81e26" stroke="#ccc" strokeWidth="1.500" />
          <rect x="3" y="13" width="20" height="20" rx="7" fill="#262626" stroke="#bbb" strokeWidth="1.500" />
          <rect x="23" y="12" width="20" height="21" rx="7" fill="#262626" stroke="#bbb" strokeWidth="1.500" />
          <rect x="13" y="11" width="20" height="12" rx="4" fill="#303030" stroke="#bbb" strokeWidth="1.200" />
          <rect x="13" y="23" width="20" height="12" rx="4" fill="#303030" stroke="#bbb" strokeWidth="1.200" />
        </Big>
      </Cell>
      <Cell><Big><path d="M2 33l17-14H6v-4h22l-7-9 4-3 14 14c4 4 6 8 5 12-1 7-7 11-14 11-8 0-14-5-14-11z" fill="#ff8a1c" /><circle cx="29" cy="26" r="10" fill="#fff" /><circle cx="29" cy="26" r="6.500" fill="#0f4f94" /></Big></Cell>
      <Cell><Big><circle cx="23" cy="23" r="23" fill="#3bb583" /><circle cx="23" cy="16" r="16" fill="#8ed693" fillOpacity=".4" /><g stroke="#e6f7ec" strokeWidth="1.600"><ellipse cx="23" cy="23" rx="6" ry="16" transform="rotate(-20 23 23)" /><ellipse cx="23" cy="23" rx="6" ry="16" transform="rotate(40 23 23)" /><ellipse cx="23" cy="23" rx="6" ry="16" transform="rotate(100 23 23)" /></g><circle cx="23" cy="23" r="2" fill="#fff" /></Big></Cell>
      <Cell><Big><path d="M44 0c-6 6-10 10-12 20l8 2c4-6 5-14 4-22z" fill="#d8d8d8" /><path d="M14 26c0-8 8-14 16-12 5 6 4 16 0 22-6 4-14 0-16-10z" fill="#b65f5c" /><path d="M9 26c2 14 24 16 32 1" stroke="#6d9130" strokeWidth="3.500" /><path d="M2 43l8-5 6 2-8 6z" fill="#aaa" /></Big></Cell>
      <Cell open>
        <Big>
          <circle cx="23" cy="23" r="21.500" fill="#34a853" />
          <path d="M4 13A21.500 21.500 0 0 1 42 13H23L14 28z" fill="#e2483c" />
          <path d="M42 13A21.500 21.500 0 0 1 22 44.500L32 28 32 13z" fill="#fccd3f" />
          <circle cx="23" cy="23" r="10" fill="#fff" /><circle cx="23" cy="23" r="8" fill="#4a86ee" />
        </Big>
      </Cell>
      <Cell open><div className="flex h-[43px] w-[43px] items-center justify-center rounded-full bg-black"><FaSpotify className="h-[43px] w-[43px] text-[#1ed760]" /></div></Cell>
      <Cell open><Big><path d="M6 5h35v19L31 40H6z" fill="#fff" /><path d="M24 24h17l-16 16h-1z" fill="#20170f" /><path d="M41 24v16H26z" fill="#fff" /></Big></Cell>
      <Cell open active><Ic className="h-[44px] w-[44px]"><Qgis /></Ic></Cell>
      <div className="flex flex-1 items-center font-['Open_Sans',sans-serif] text-[21px]">
        <svg viewBox="0 0 28 30" className="ml-[444px] h-[30px] w-[28px] shrink-0" fill="none" stroke="#fff" strokeWidth="2.200"><circle cx="19.500" cy="6" r="5" /><path d="M13 17c1-8 12-8 14-1" /><circle cx="8.500" cy="17" r="4.500" /><path d="M1.500 29c1-10 13-10 14 0" /></svg>
        <svg viewBox="0 0 24 14" className="ml-[43px] h-[14px] w-[24px] shrink-0" fill="none" stroke="#fff" strokeWidth="2"><path d="M1 13L12 1.500 23 13" /></svg>
        <svg viewBox="0 0 30 20" className="ml-[20px] h-[20px] w-[30px] shrink-0" fill="none" stroke="#fff" strokeWidth="2"><path d="M1 2h26v16H1z" /><path d="M28.500 7v6" /><path d="M4 5h10v10H4z" fill="#fff" stroke="none" /></svg>
        <svg viewBox="0 0 32 28" className="ml-[14px] h-[28px] w-[32px] shrink-0" fill="none"><path d="M2 18C-1 12 3 8 6 9c1-7 9-9 13-4 6-1 9 5 6 10l-3 5H6z" fill="#fff" /><circle cx="22" cy="19" r="9" fill="#fff" /><path d="M16 18a6 6 0 0 1 11-3M28 20a6 6 0 0 1-11 3" stroke="#2a63c8" strokeWidth="2.500" /></svg>
        <svg viewBox="0 0 24 24" className="ml-[19px] h-[24px] w-[24px] shrink-0" fill="none" stroke="#ddd" strokeWidth="2"><path d="M1 23C1 10 10 1 23 1" /><path d="M7 23c0-9 7-15 16-15" /><path d="M13 23c0-5 4-9 10-9" /><circle cx="20" cy="20.500" r="2" fill="#fff" stroke="none" /></svg>
        <svg viewBox="0 0 28 22" className="ml-[18px] h-[22px] w-[28px] shrink-0" fill="none" stroke="#fff" strokeWidth="1.800"><path d="M1 7h4l5-6v20l-5-6H1zM16 6l10 10M26 6L16 16" /></svg>
        <T w={40} className="ml-[24px]">CAT</T>
        <div className="ml-[28px] flex w-[117px] shrink-0 flex-col items-center leading-[36px]">
          <T w={53}>10:44</T>
          <T w={117}>05/07/2018</T>
        </div>
        <div className="relative ml-[35px] h-[46px] w-[46px] shrink-0">
          <svg viewBox="0 0 46 46" className="h-[46px] w-[46px]"><path d="M0 0h31v26H18l-5 7v-7H0z" fill="#fff" /><path d="M6 7h19M6 13h19M6 19h19" stroke="#20170f" strokeWidth="2.200" /></svg>
          <div className="absolute left-[14px] top-[14px] flex h-[32px] w-[32px] items-center justify-center rounded-full border-2 border-[#888] bg-[#303030] text-[21px] font-bold">3</div>
        </div>
        <div className="ml-[24px] h-[77px] w-px bg-[#8a8580]" />
      </div>
    </div>
  );
}

/* ---------- right dock ---------- */
function Dock() {
  return (
    <div className="flex w-[658px] shrink-0">
      <div className="flex w-[10px] shrink-0 flex-col items-center pt-[494px]">
        <div className="h-[432px] w-[5px] bg-[radial-gradient(circle,#c6c6c6_1.300px,#fafafa_1.800px,transparent_2.300px)] bg-[length:5px_8px]" />
      </div>
      <div className="flex w-[648px] flex-col">
        <div className="flex h-[34px] items-end border-b-2 border-[#bcbcbc]">
          <div className="-mb-[2px] flex h-[34px] w-[93px] items-center justify-center rounded-t-[5px] border-2 border-b-0 border-[#c4c4c4] bg-[#efefef]"><T w={50}>Items</T></div>
          <div className="flex h-[29px] w-[200px] items-center rounded-tr-[5px] border-2 border-b-0 border-l-0 border-[#b4b4b4] bg-gradient-to-b from-[#fafafa] to-[#dedede] pl-[25px] pt-[2px]"><T w={153}>Command history</T></div>
        </div>
        <div className="flex h-[36px] items-center">
          <HDots className="ml-[2px] w-[275px]" />
          <T w={48} className="ml-[11px] mt-[3px]">Items</T>
          <HDots className="ml-[6px] w-[277px]" />
          <div className="ml-[4px]"><Close /></div>
        </div>
        <div className="flex h-[270px] flex-col border-2 border-[#b8b8b8] bg-white">
          <div className="flex h-[47px] shrink-0 border-2 border-[#888] bg-gradient-to-b from-[#fbfbfb] to-[#e0e0e0]">
            <div className="flex w-[43px] items-center justify-center">
              <svg viewBox="0 0 30 22" className="h-[22px] w-[30px]" fill="none"><path d="M1 4C8-1 22-1 29 4" stroke="#999" strokeWidth="1.500" /><path d="M1 12C8 3 22 3 29 12 22 21 8 21 1 12z" fill="#f4f4f4" stroke="#999" strokeWidth="1.500" /><circle cx="15" cy="11" r="7" fill="#6c9ace" /><circle cx="15" cy="10" r="3" fill="#16324f" /></svg>
            </div>
            <div className="flex w-[46px] items-center justify-center border-l-[3px] border-[#888]"><Ic className="h-[30px] w-[30px]">{I.lock}</Ic></div>
            <div className="flex items-center pl-[7px]"><T w={40}>Item</T></div>
          </div>
          <div className="flex h-[27px] items-center pl-[4px]">
            <Check><svg viewBox="0 0 18 18" className="h-[18px] w-[18px] shrink-0"><path d="M3 1l12 16M15 1L3 17" stroke="#000" strokeWidth="4.500" /></svg></Check>
            <Check className="ml-[23px]" />
            <T w={62} className="ml-[20px] font-bold">Map 0</T>
          </div>
        </div>
        <div className="flex h-[10px] items-center"><HDots className="ml-[213px] w-[214px] !h-[5px]" /></div>
        <div className="flex h-[36px] items-end border-b-2 border-[#bcbcbc]">
          <div className="-mb-[2px] flex h-[36px] w-[154px] items-center rounded-t-[5px] border-2 border-b-0 border-[#b4b4b4] bg-[#efefef] pl-[20px]"><T w={107}>Composition</T></div>
          <div className="flex h-[30px] w-[182px] items-center border-2 border-b-0 border-l-0 border-[#b4b4b4] bg-gradient-to-b from-[#fafafa] to-[#dedede] pl-[22px] pt-[2px]"><T w={135}>Item properties</T></div>
          <div className="flex h-[30px] w-[186px] items-center rounded-tr-[5px] border-2 border-b-0 border-l-0 border-[#b4b4b4] bg-gradient-to-b from-[#fafafa] to-[#dedede] pl-[22px] pt-[2px]"><T w={142}>Atlas generation</T></div>
        </div>
        <div className="flex h-[34px] items-center">
          <HDots className="ml-[5px] w-[244px]" />
          <T w={99} className="ml-[12px] mt-[3px]">Composition</T>
          <HDots className="ml-[11px] w-[248px]" />
          <div className="ml-[4px]"><Close /></div>
        </div>
        <div className="flex h-[976px] rounded-[4px] border-2 border-[#bcbcbc]">
          <div className="flex flex-1 flex-col pl-[17px] pt-[18px]">
            <Section title="Page size" w={93} className="h-[269px] pt-[22px]">
              <Row label="Presets" w={64}><Combo className="h-[34px] w-[382px]" text="A4 (210x297 mm)" w={158} /><Defined /></Row>
              <Row label="Width" w={50} className="mt-[13px] h-[39px]"><Spin off className="h-[39px] w-[382px]" text="297.00" w={58} /><Defined /></Row>
              <Row label="Height" w={55} className="mt-[10px] h-[39px]"><Spin off className="h-[39px] w-[382px]" text="210.00" w={59} /><Defined /></Row>
              <Row label="Units" w={43} className="mt-[10px] h-[33px]"><Combo off className="h-[34px] w-[438px]" text="mm" w={33} /></Row>
              <Row label="Orientation" w={96} className="mt-[13px] h-[33px]"><Combo className="h-[34px] w-[382px]" text="Landscape" w={91} /><Defined /></Row>
            </Section>
            <div className="h-[10px]" />
            <Section title="Resize page to content" w={232} className="h-[211px] pt-[18px]">
              <Row label="Top margin (mm)" w={153} lw="ml-[130px] w-[162px]"><Spin className="h-[34px] w-[125px]" text="0.00" w={37} /></Row>
              <div className="mt-[10px] flex h-[33px] items-center">
                <T w={32} className="mr-[106px]">Left</T>
                <Spin className="h-[34px] w-[129px]" text="0.00" w={37} />
                <T w={44} className="ml-[10px] mr-[95px]">Right</T>
                <Spin className="h-[34px] w-[129px]" text="0.00" w={37} />
              </div>
              <Row label="Bottom" w={60} lw="ml-[130px] w-[162px]" className="mt-[10px] h-[33px]"><Spin className="h-[34px] w-[125px]" text="0.00" w={37} /></Row>
              <div className="ml-[129px] mt-[10px] flex h-[43px] w-[288px] items-center justify-center rounded-[4px] border-2 border-[#b4b4b4] bg-gradient-to-b from-[#f8f8f8] to-[#dcdcdc]"><T w={106}>Resize page</T></div>
            </Section>
            <div className="h-[9px]" />
            <Section title="Page settings" w={136} className="h-[136px] pt-[23px]">
              <Row label="Number of pages" w={150} lw="w-[277px]"><Spin className="h-[33px] w-[211px]" text="1" w={8} /><Defined /></Row>
              <Row label="Page background" w={149} lw="w-[277px]" className="mt-[12px] h-[48px]">
                <div className="flex h-[48px] w-[267px] items-center rounded-[4px] border-2 border-[#b4b4b4] bg-gradient-to-b from-[#f8f8f8] to-[#dcdcdc] pl-[70px]">
                  <div className="mr-[6px] h-[31px] w-[31px] bg-white" /><T w={84}>Change...</T>
                </div>
              </Row>
            </Section>
            <div className="h-[9px]" />
            <Section title="Export settings" w={152} className="h-[199px] pt-[20px]">
              <Row label="Export resolution" w={147} lw="w-[277px]"><Spin className="h-[34px] w-[267px]" text="300 dpi" w={66} /></Row>
              <div className="mt-[12px] flex h-[25px] items-center"><Check /><T w={124} className="ml-[10px]">Print as raster</T></div>
              <div className="mt-[16px] flex h-[25px] items-center"><Check /><T w={130} className="ml-[10px]">Save world file</T></div>
              <Row label="Reference map" w={134} lw="w-[277px]" className="mt-[14px] h-[33px]"><Combo className="h-[34px] w-[267px]" text="Map 0" w={54} /></Row>
            </Section>
          </div>
          <div className="mr-[1px] mt-[2px] flex h-[970px] w-[25px] shrink-0 flex-col bg-[#f4f4f4] bg-[radial-gradient(circle,#dcdcdc_1px,transparent_1.500px)] bg-[length:5px_4px]">
            <div className="flex h-[25px] items-center justify-center rounded-t-[4px] border-2 border-[#8c8c8c] bg-white"><Tri up /></div>
            <div className="flex h-[574px] items-center justify-center border-2 border-t-0 border-[#8c8c8c] bg-gradient-to-r from-white to-[#e2e2e2]">
              <div className="h-[30px] w-[16px] bg-[radial-gradient(circle,#b0b0b0_1.200px,transparent_1.800px)] bg-[length:5.300px_6px]" />
            </div>
            <div className="flex-1" />
            <div className="flex h-[24px] items-center justify-center border-2 border-[#8c8c8c] bg-white"><Tri up /></div>
            <div className="flex h-[25px] items-center justify-center rounded-b-[4px] border-2 border-t-0 border-[#8c8c8c] bg-white"><Tri /></div>
          </div>
        </div>
      </div>
    </div>
  );
}

/* ---------- composer window ---------- */
function Composer() {
  return (
    <div className="ml-[276px] mt-[166px] flex w-[2953px] flex-col bg-[#efefef] font-['DejaVu_Sans_Condensed','DejaVu_Sans',sans-serif] text-[19.500px] leading-[24px] text-black [font-stretch:condensed]">
      <div className="flex h-[48px] items-center bg-white">
        <Ic className="ml-[4px] h-[30px] w-[28px]"><Qgis /></Ic>
        <T w={57} className="ml-[11px] font-['Open_Sans',sans-serif] text-[23px]">print1</T>
        <div className="ml-[2614px] h-[2px] w-[19px] bg-black" />
        <svg viewBox="0 0 19 20" className="ml-[70px] h-[20px] w-[19px]" fill="none" stroke="#000" strokeWidth="1.800"><path d="M1 4.500h13.500V19H1zM4 4V1h14v14.500h-3" /></svg>
        <svg viewBox="0 0 20 20" className="ml-[71px] h-[20px] w-[20px]" fill="none" stroke="#000" strokeWidth="1.800"><path d="M.5.5l19 19M19.500.5l-19 19" /></svg>
      </div>
      <div className="flex h-[39px] items-center border-b-2 border-[#b8b8b8] pl-[15px] pt-[2px]">
        <T w={89}>Composer</T>
        <T w={32} className="ml-[24px]">Edit</T>
        <T w={43} className="ml-[23px]">View</T>
        <T w={56} className="ml-[24px]">Layout</T>
        <T w={44} className="ml-[23px]">Atlas</T>
        <T w={71} className="ml-[23px]">Settings</T>
      </div>
      <div className="flex h-[61px] items-center border-b-[3px] border-[#bababa]">
        <div className="ml-[8px]"><VDots /></div>
        <Group className="ml-[7px] mr-[10px]" names={["save"]} />
        <VSep />
        <Group className="ml-[9px] mr-[10px]" names={["page", "dup", "manage", "folder", "saveAs"]} />
        <VSep />
        <Group className="ml-[9px] mr-[18px]" names={["print", "img", "svg", "pdf", "undo", "redo"]} />
        <VDots />
        <Group className="ml-[8px] mr-[19px]" names={["zfull", "z11", "zin", "zout", "refresh"]} />
        <VDots />
        <Group className="ml-[7px] mr-[19px]" names={["sel", "desel", "lock", "unlock", "raise", "align"]} />
        <VDots />
        <Group className="ml-[8px]" names={["atlas", "first", "prev"]} />
        <div className="ml-[8px] flex h-[46px] w-[120px] rounded-[3px] border-2 border-[#8e8e8e] text-[#808080]">
          <div className="flex flex-1 items-center pl-[8px]"><T w={8}>1</T></div>
          <div className="flex w-[25px] items-center justify-center border-l-2 border-[#8e8e8e] bg-gradient-to-b from-white to-[#dedede]"><Tri className="!h-[6px]" /></div>
        </div>
        <Group className="ml-[8px]" names={["next", "last", "printOff", "imgOff", "atlasSet"]} />
      </div>
      <div className="flex h-[1397px]">
        <div className="flex w-[62px] shrink-0 flex-col border-r-[3px] border-[#bababa] pl-[5px]">
          <HDots className="ml-[3px] mt-[8px] w-[46px]" />
          <div className="mt-[6px] flex w-[52px] flex-col items-center gap-[14px]">
            {["hand", "zoomArea", "select", "move", "nodes"].map((n) => <Ic key={n}>{I[n]}</Ic>)}
          </div>
          <div className="mt-[8px] h-[2px] w-[49px] bg-[#b8b8b8]" />
          <div className="mt-[4px] flex h-[50px] w-[52px] items-center justify-center rounded-[4px] border-2 border-[#808080] bg-gradient-to-br from-[#c4c4c4] to-[#ededed]"><Ic className="mt-[2px] h-[38px] w-[38px]">{I.map}</Ic></div>
          <div className="mt-[12px] flex w-[52px] flex-col items-center gap-[14px]">
            {["image", "label", "legend", "scale", "shape", "addNodes", "arrow", "table", "html"].map((n) => <Ic key={n}>{I[n]}</Ic>)}
          </div>
        </div>
        <div className="ml-[1px] flex w-[2232px] shrink-0 flex-col border-2 border-b-[3px] border-[#bababa]">
          <TopRuler />
          <div className="flex flex-1">
            <SideRuler />
            <div className="relative flex-1 overflow-hidden bg-[#d7d7d7]">
              <div className="absolute left-[281px] top-[106px] h-[1168px] w-[1653px] bg-[#989898]" />
              <div className="absolute left-[270px] top-[95px] h-[1168px] w-[1654px] bg-white">
                <MapDrawing />
                <Grip className="left-0 top-0" />
                <Grip className="left-[818px] top-0" />
                <Grip className="right-0 top-0" />
                <Grip className="left-0 top-[576px]" />
                <Grip className="right-0 top-[576px]" />
                <Grip className="bottom-0 left-0" />
                <Grip className="bottom-0 left-[818px]" />
                <Grip className="bottom-0 right-0" />
                <svg width="1654" height="1168" className="absolute left-0 top-0" fill="none">
                  <rect x="1" y="1" width="1652" height="1166" stroke="#3a94cf" strokeWidth="2" />
                  <rect x="1" y="1" width="1652" height="1166" stroke="#5c0a34" strokeWidth="2" strokeDasharray="5 3" />
                </svg>
              </div>
            </div>
          </div>
        </div>
        <Dock />
      </div>
      <div className="flex h-[41px] items-center pt-[1px]">
        <T w={135} className="ml-[2px]">x: 345.932 mm</T>
        <T w={135} className="ml-[28px]">y: 50.5636 mm</T>
        <T w={66} className="ml-[30px]">page: 1</T>
        <div className="ml-[97px] flex h-[34px] w-[152px] rounded-[3px] border-2 border-[#b4b4b4] bg-white">
          <div className="flex flex-1 items-center pl-[4px]"><T w={58}>21.2%</T></div>
          <div className="flex w-[24px] items-center justify-center border-l-2 border-[#b4b4b4] bg-gradient-to-b from-white to-[#dedede]"><Tri /></div>
        </div>
        <T w={133} className="ml-[11px]">1 item selected</T>
      </div>
      <Taskbar />
    </div>
  );
}

/* ---------- annotations laid over the window ---------- */
const Note = ({ className, children }) => (
  <div className={"absolute flex flex-col font-['Noto_Sans',sans-serif] text-[49px] font-bold italic leading-[60px] text-[#2d3f58] " + className}>{children}</div>
);
const Frame = ({ className }) => <div className={"absolute border-[#2d3f58] " + className} />;

export default function App() {
  return (
    <div className="relative flex h-[2480px] w-[3508px] flex-col overflow-hidden border-2 border-[#2d3f58] bg-white">
      <div className="ml-[276px] mt-[102px] flex h-[138px] w-[806px] shrink-0 items-center bg-[#00ffff] pb-[5px] pl-[44px] font-['Noto_Sans',sans-serif] text-[97px] font-bold italic leading-none text-[#2d3f58]">
        <T w={726}>Interfaz: diseño</T>
      </div>
      <Composer />

      <Note className="left-[2133px] top-[289px]"><T w={355}>propiedades de</T><T w={157}>la hoja</T></Note>
      <Note className="right-[955px] top-[978px] items-end"><T w={175}>tamaño</T></Note>
      <Note className="right-[955px] top-[1281px] items-end"><T w={165}>ajustar</T><T w={175}>tamaño</T></Note>
      <Note className="right-[955px] top-[1522px] items-end"><T w={165}>ajustes</T></Note>
      <Note className="right-[955px] top-[1697px] items-end"><T w={200}>exportar</T><T w={165}>ajustes</T></Note>

      <svg viewBox="2530 310 180 590" className="absolute left-[2528px] top-[308px] h-[590px] w-[180px]">
        <path d="M2534 322H2688V864L2703 849V867L2682 888 2660 867V849L2675.500 864V335H2534z" fill="#2d3f58" />
      </svg>
      <Frame className="left-[2573px] top-[893px] h-[62px] w-[171px] border-[8px]" />
      <Frame className="left-[2573px] top-[983px] h-[62px] w-[171px] border-[8px]" />
      <Frame className="left-[2571px] top-[1285px] h-[64px] w-[317px] border-[10px]" />
      <Frame className="left-[2571px] top-[1526px] h-[65px] w-[317px] border-[10px]" />
      <Frame className="left-[2571px] top-[1700px] h-[65px] w-[317px] border-[10px]" />
    </div>
  );
}
